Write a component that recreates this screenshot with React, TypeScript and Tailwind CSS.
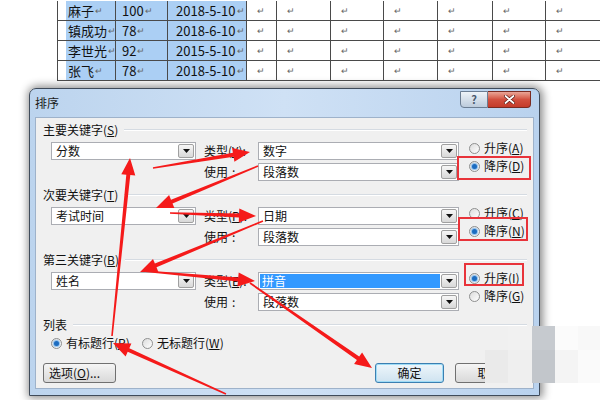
import { Fragment, type ReactNode } from "react";

const rows = [
  ["麻子", "100", "2018-5-10"],
  ["镇成功", "78", "2018-6-10"],
  ["李世光", "92", "2015-5-10"],
  ["张飞", "78", "2018-5-10"],
];

// red annotation arrows: [x1, y1, x2, y2]
const arrows = [
  [112, 336, 130, 158],
  [153, 168, 250, 152],
  [258, 166, 156, 208],
  [170, 213, 256, 216],
  [263, 221, 140, 272],
  [143, 271, 255, 281],
  [250, 283, 372, 368],
  [226, 394, 113, 343],
];

function arrowPoints(x1: number, y1: number, x2: number, y2: number) {
  const len = Math.hypot(x2 - x1, y2 - y1);
  const ux = (x2 - x1) / len;
  const uy = (y2 - y1) / len;
  const nx = -uy;
  const ny = ux;
  const L = 17;
  const W = 7;
  const bx = x2 - ux * L;
  const by = y2 - uy * L;
  const p = (x: number, y: number) => `${x.toFixed(1)},${y.toFixed(1)}`;
  return [
    p(x1 + nx * 0.8, y1 + ny * 0.8),
    p(bx + nx * 2, by + ny * 2),
    p(bx + nx * W, by + ny * W),
    p(x2, y2),
    p(bx - nx * W, by - ny * W),
    p(bx - nx * 2, by - ny * 2),
    p(x1 - nx * 0.8, y1 - ny * 0.8),
  ].join(" ");
}

function Mark() {
  return <span className="ml-[1px] text-[9px] text-[#666]">↵</span>;
}

function K({ t, k }: { t: string; k: string }) {
  return (
    <>
      {t}(<span className="underline">{k}</span>)
    </>
  );
}

function Drop() {
  return (
    <div className="w-[16px] my-[1px] mr-[1px] rounded-[2px] border border-[#a0a0a0] bg-gradient-to-b from-[#f7f7f7] to-[#d8d8d8] flex items-center justify-center">
      <svg width="7" height="4" viewBox="0 0 7 4">
        <path d="M0 0h7L3.5 4z" fill="#111" />
      </svg>
    </div>
  );
}

function Combo({ text, className, selected }: { text: string; className: string; selected?: boolean }) {
  return (
    <div className={`h-[18px] flex border border-[#abadb3] bg-white ${className}`}>
      <div className="flex-1 p-[1px] flex">
        <div
          className={
            selected
              ? "flex-1 flex items-center pl-[2px] bg-[#3399ff] text-white"
              : "flex-1 flex items-center pl-[3px]"
          }
        >
          {text}
        </div>
      </div>
      <Drop />
    </div>
  );
}

function Radio({ checked, label }: { checked?: boolean; label: ReactNode }) {
  return (
    <div className="h-[18px] flex items-center">
      <span className="w-[11px] h-[11px] rounded-full border border-[#8e8f8f] bg-gradient-to-br from-[#dcdcdc] to-[#ffffff] flex items-center justify-center">
        {checked && <span className="w-[5px] h-[5px] rounded-full bg-[#1d6cc0] shadow-[0_0_1px_1px_#86bbec]" />}
      </span>
      <span className="ml-[4px] whitespace-nowrap">{label}</span>
    </div>
  );
}

function Header({ children }: { children: ReactNode }) {
  return (
    <div className="h-[14px] flex items-center pl-[7px] pr-[6px]">
      <span className="whitespace-nowrap">{children}</span>
      <div className="ml-[6px] flex-1 h-[2px] border-t border-b border-t-[#d5dbe2] border-b-white" />
    </div>
  );
}

function Group({
  title,
  left,
  typeLabel,
  type,
  selectedType,
  radios,
}: {
  title: ReactNode;
  left: string;
  typeLabel: ReactNode;
  type: string;
  selectedType?: boolean;
  radios: ReactNode;
}) {
  return (
    <div className="h-[65px] flex flex-col">
      <Header>{title}</Header>
      <div className="mt-[2px] flex">
        <div className="ml-[15px] mt-[3px]">
          <Combo text={left} className="w-[145px]" />
        </div>
        <div className="ml-[8px] w-[54px] mt-[3px] flex flex-col gap-[3px]">
          <div className="h-[18px] flex items-center whitespace-nowrap">{typeLabel}:</div>
          <div className="h-[18px] flex items-center">
            使用<span className="ml-[4px]">:</span>
          </div>
        </div>
        <div className="mt-[3px] flex flex-col gap-[3px]">
          <Combo text={type} className="w-[201px]" selected={selectedType} />
          <Combo text="段落数" className="w-[201px]" />
        </div>
        <div className="ml-[10px] flex flex-col">{radios}</div>
      </div>
    </div>
  );
}

export default function App() {
  return (
    <div className="relative w-[600px] h-[400px] overflow-hidden bg-white text-[12px] text-[#111] font-['Noto_Sans_CJK_SC','Noto_Sans',sans-serif]">
      {/* document table */}
      <div className="mt-[1px] ml-[57px] grid grid-cols-[58px_52px_79px_30px_54px_53px_54px_55px_53px_55px] border-l border-[#4a4a4a]">
        {rows.map((r, i) => (
          <Fragment key={i}>
            <div className="h-[20px] border-r border-b border-[#4a4a4a] pl-[8px]">
              <div className="h-full bg-[#abcff4] flex items-center pl-[2px] text-[13px] whitespace-nowrap">
                {r[0]}
                <Mark />
              </div>
            </div>
            <div className="h-[20px] border-r border-b border-[#4a4a4a] bg-[#abcff4] flex items-center pl-[6px] text-[13px]">
              {r[1]}
              <Mark />
            </div>
            <div className="h-[20px] border-r border-b border-[#4a4a4a] bg-[#abcff4] flex items-center pl-[8px] text-[13px]">
              {r[2]}
              <Mark />
            </div>
            {[0, 1, 2, 3, 4, 5, 6].map((c) => (
              <div key={c} className="h-[20px] border-r border-b border-[#4a4a4a] flex items-center pl-[9px]">
                <Mark />
              </div>
            ))}
          </Fragment>
        ))}
      </div>

      {/* sort dialog */}
      <div className="mt-[7px] ml-[29px] w-[511px] h-[308px] flex flex-col rounded-t-[7px] border border-[#3f4b5a] bg-gradient-to-r from-[#bcd4ee] via-[#cfe1f5] to-[#b9d2ee] shadow-[1px_0_8px_2px_rgba(0,0,0,0.45)]">
        <div className="h-[28px] flex">
          <div className="pl-[5px] self-center text-[12px] text-[#1a1a1a]">排序</div>
          <div className="ml-auto mr-[8px] mt-[2px] h-[17px] flex">
            <div className="w-[28px] h-full rounded-bl-[4px] border border-[#6b7d93] bg-gradient-to-b from-[#eef3f8] to-[#bccbdc] flex items-center justify-center text-[11px] font-bold text-[#4a5a6e]">
              ?
            </div>
            <div className="w-[43px] h-full rounded-br-[4px] border border-l-0 border-[#7a2b22] bg-gradient-to-b from-[#e9a597] via-[#d2503f] to-[#c43b2a] flex items-center justify-center">
              <svg width="11" height="9" viewBox="0 0 11 9">
                <path d="M1.5 1l8 7M9.5 1l-8 7" stroke="#5a1a14" strokeWidth="3.2" strokeLinecap="round" />
                <path d="M1.5 1l8 7M9.5 1l-8 7" stroke="#fff" strokeWidth="1.8" strokeLinecap="round" />
              </svg>
            </div>
          </div>
        </div>

        <div className="mx-[5px] h-[272px] border border-[#9eb2ca] bg-[#f0f0f0] pt-[5px] flex flex-col">
          <Group
            title={<K t="主要关键字" k="S" />}
            left="分数"
            typeLabel={<K t="类型" k="Y" />}
            type="数字"
            radios={
              <>
                <Radio label={<K t="升序" k="A" />} />
                <Radio checked label={<K t="降序" k="D" />} />
              </>
            }
          />
          <Group
            title={<K t="次要关键字" k="T" />}
            left="考试时间"
            typeLabel={<K t="类型" k="P" />}
            type="日期"
            radios={
              <>
                <Radio label={<K t="升序" k="C" />} />
                <Radio checked label={<K t="降序" k="N" />} />
              </>
            }
          />
          <Group
            title={<K t="第三关键字" k="B" />}
            left="姓名"
            typeLabel={<K t="类型" k="E" />}
            type="拼音"
            selectedType
            radios={
              <>
                <Radio checked label={<K t="升序" k="I" />} />
                <Radio label={<K t="降序" k="G" />} />
              </>
            }
          />
          <Header>列表</Header>
          <div className="mt-[2px] pl-[15px] flex">
            <div className="w-[91px]">
              <Radio checked label={<K t="有标题行" k="R" />} />
            </div>
            <Radio label={<K t="无标题行" k="W" />} />
          </div>
          <div className="mt-[11px] pl-[7px] pr-[9px] flex">
            <div className="w-[73px] h-[20px] rounded-[3px] border border-[#707070] bg-gradient-to-b from-[#f5f5f5] to-[#d9d9d9] flex items-center pl-[5px]">
              选项(<span className="underline">O</span>)...
            </div>
            <div className="ml-auto w-[69px] h-[20px] rounded-[3px] border border-[#3c7fb1] bg-gradient-to-b from-[#eef6fb] to-[#cfe3f0] shadow-[inset_0_0_0_1px_#9fdcf6] flex items-center justify-center">
              确定
            </div>
            <div className="ml-[11px] w-[69px] h-[20px] rounded-[3px] border border-[#707070] bg-gradient-to-b from-[#f5f5f5] to-[#d9d9d9] flex items-center justify-center">
              取消
            </div>
          </div>
        </div>
      </div>

      {/* mosaic patch over bottom-right corner */}
      <div className="absolute left-[508px] top-[326px] w-[24px] h-[24px] bg-[#f1f1f1]" />
      <div className="absolute left-[532px] top-[326px] w-[23px] h-[24px] bg-[#c6cacf]" />
      <div className="absolute left-[555px] top-[326px] w-[23px] h-[24px] bg-[#fbfbfb]" />
      <div className="absolute left-[578px] top-[326px] w-[22px] h-[24px] bg-[#f8f8f8]" />
      <div className="absolute left-[485px] top-[350px] w-[23px] h-[33px] bg-[#eaeaea]" />
      <div className="absolute left-[508px] top-[350px] w-[24px] h-[33px] bg-[#efefef]" />
      <div className="absolute left-[532px] top-[350px] w-[23px] h-[33px] bg-[#c2c6cb]" />
      <div className="absolute left-[555px] top-[350px] w-[23px] h-[33px] bg-[#f4f4f4]" />
      <div className="absolute left-[578px] top-[350px] w-[22px] h-[33px] bg-[#fafafa]" />

      {/* red annotations */}
      <svg className="absolute inset-0 pointer-events-none" width="600" height="400" viewBox="0 0 600 400">
        <rect x="458" y="157" width="72" height="22" fill="none" stroke="#e8333a" strokeWidth="2" />
        <rect x="459" y="218" width="68" height="22" fill="none" stroke="#e8333a" strokeWidth="2" />
        <rect x="465" y="264" width="58" height="21" fill="none" stroke="#e8333a" strokeWidth="2" />
        {arrows.map(([x1, y1, x2, y2], i) => (
          <polygon key={i} points={arrowPoints(x1, y1, x2, y2)} fill="#f51a1a" />
        ))}
      </svg>
    </div>
  );
}
